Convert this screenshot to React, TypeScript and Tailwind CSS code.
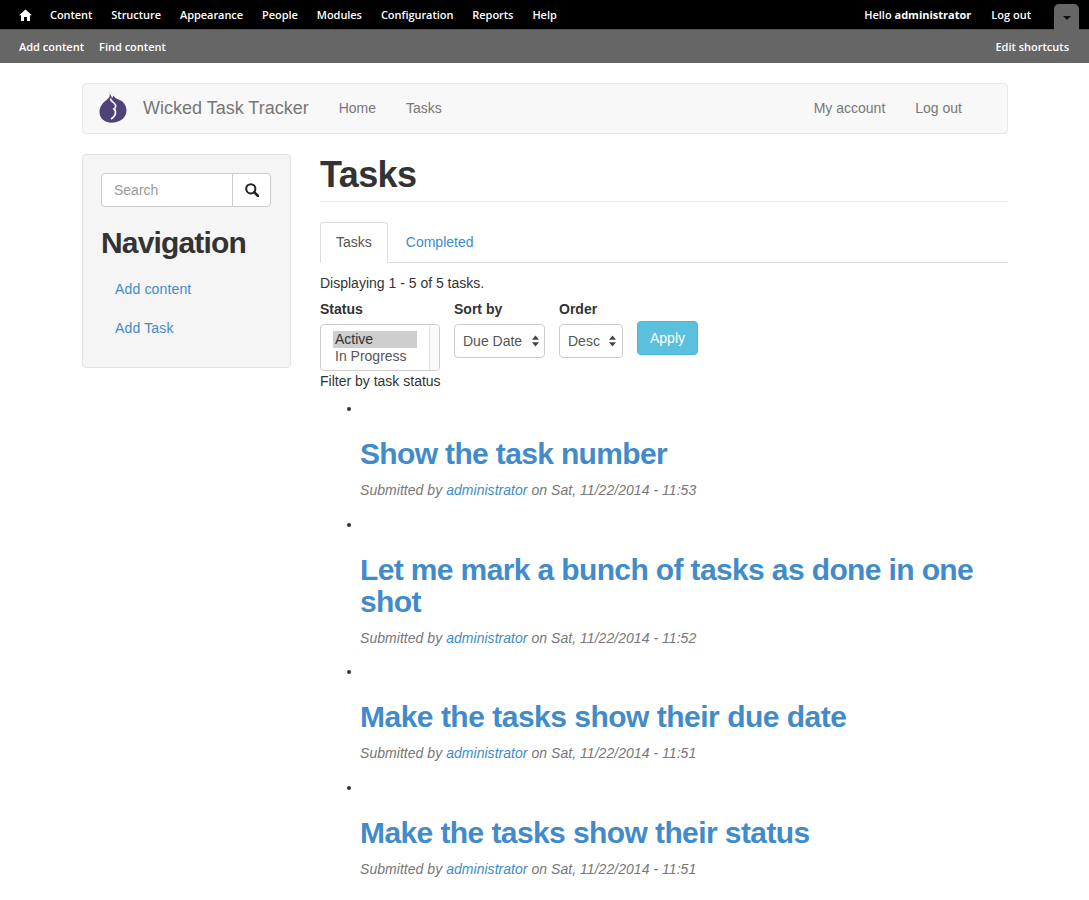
import React from "react";

const sans = "font-['Liberation_Sans',Arial,sans-serif]";

function Arrows() {
  return (
    <svg width="7" height="12" viewBox="0 0 7 12" className="ml-auto shrink-0">
      <path d="M3.5 0.5 L7 4.7 H0 Z M3.5 11.5 L7 7.3 H0 Z" fill="#444" />
    </svg>
  );
}

function Post({ title, date, tracking }: { title: React.ReactNode; date: string; tracking: string }) {
  return (
    <li className="list-disc">
      <div className="h-[20px]">&nbsp;</div>
      <h2 className={`ml-[-2px] mt-[20px] mb-[10px] text-[30px] leading-[32px] font-bold text-[#428bca] ${tracking}`}>{title}</h2>
      <p className="ml-[-2px] mb-[13.5px] italic text-[14px] leading-[20px] tracking-[0.04px] text-[#777]">
        Submitted by <a className="text-[#428bca]">administrator</a> on {date}
      </p>
    </li>
  );
}

export default function App() {
  return (
    <div className={`${sans} h-[900px] overflow-hidden bg-white text-[14px] leading-[20px] text-[#333]`}>
      <div className="font-['Open_Sans',sans-serif] text-[11px] font-semibold text-white">
        <div className="relative flex h-[29px] items-center bg-black pl-[19px] pr-[58px]">
          <svg width="13" height="12" viewBox="0 0 13 12" className="mr-[18px]">
            <path d="M6.5 0.5 L13 6.3 H11 V12 H8 V8 H5 V12 H2 V6.3 H0 Z" fill="#fff" />
          </svg>
          <div className="flex gap-[19px] tracking-[-0.05px]">
            <span>Content</span><span>Structure</span><span>Appearance</span><span>People</span>
            <span>Modules</span><span>Configuration</span><span>Reports</span><span>Help</span>
          </div>
          <div className="ml-auto flex gap-[20px]">
            <span>Hello <b className="font-bold">administrator</b></span><span>Log out</span>
          </div>
          <div className="absolute right-[10px] top-[4px] flex h-[26px] w-[25px] items-center justify-center rounded-t-[5px] bg-[#666]">
            <svg width="8" height="4" viewBox="0 0 8 4" className="mt-[2px]"><path d="M0 0H8L4 4Z" fill="#111" /></svg>
          </div>
        </div>
        <div className="flex h-[34px] items-center gap-[15px] border-t border-[#555] bg-[#666] pl-[19px] pr-[20px]">
          <span>Add content</span><span>Find content</span>
          <span className="ml-auto">Edit shortcuts</span>
        </div>
      </div>

      <div className="ml-[82px] w-[926px] pt-[20px]">
        <nav className="flex h-[51px] items-center rounded-[4px] border border-[#e7e7e7] bg-[#f8f8f8] pb-[1px] text-[#777]">
          <svg width="28" height="30" viewBox="0 0 28 30" className="ml-[16px]">
            <path d="M10.5 0.5 C11.5 3 10 5 7.5 7 C3 10 0.5 14.5 0.5 19 C0.5 25.5 6 29.7 12.5 29.7 C20.5 29.7 27.5 25 27.5 17.5 C27.5 12 24 8 19.5 6.5 C17 5.5 15.5 4.5 14.5 2.5 C14 4 13.5 4.5 13 5 C12.5 3.5 11.5 1.5 10.5 0.5 Z" fill="#4f4279" />
            <path d="M11.5 5.5 C11.5 8 13.5 8.5 15 10 C17.5 12.5 17 15 15 16 C17.5 18 17.2 23 12 26" fill="none" stroke="#f8f8f8" strokeWidth="1.7" />
          </svg>
          <span className="ml-[16px] text-[18px]">Wicked Task Tracker</span>
          <span className="ml-[30px]">Home</span>
          <span className="ml-[30px]">Tasks</span>
          <span className="ml-auto">My account</span>
          <span className="ml-[30px] mr-[45px]">Log out</span>
        </nav>

        <div className="mt-[20px] flex items-start">
          <aside className="h-[214px] w-[209px] shrink-0 rounded-[4px] border border-[#e3e3e3] bg-[#f5f5f5] px-[18px] pt-[18px]">
            <div className="flex h-[34px] w-[170px] rounded-[4px] border border-[#ccc] bg-white">
              <span className="flex-1 border-r border-[#ccc] pl-[12px] pt-[6px] text-[#999]">Search</span>
              <span className="flex w-[37px] items-center justify-center">
                <svg width="14" height="14" viewBox="0 0 14 14" fill="none" stroke="#222" strokeWidth="2">
                  <circle cx="5.8" cy="5.8" r="4.6" /><path d="M9.2 9.2 L13 13" strokeWidth="2.6" strokeLinecap="round" />
                </svg>
              </span>
            </div>
            <h2 className="mt-[19px] mb-[10px] text-[30px] leading-[33px] font-bold tracking-[-0.85px]">Navigation</h2>
            <ul className="text-[#428bca] tracking-[0.15px]">
              <li className="px-[14px] py-[10px]">Add content</li>
              <li className="mt-[-1px] px-[14px] py-[10px]">Add Task</li>
            </ul>
          </aside>

          <main className="ml-[29px] min-w-0 flex-1">
            <h1 className="border-b border-[#eee] pb-[7px] pt-[1px] text-[36px] leading-[39px] font-bold tracking-[-0.6px] text-[#333]">Tasks</h1>
            <div className="mt-[20px] flex h-[41px] border-b border-[#ddd]">
              <span className="h-[41px] rounded-t-[4px] border border-[#ddd] border-b-white bg-white px-[15px] pt-[9px] text-[#555]">Tasks</span>
              <span className="ml-[3px] px-[15px] pt-[10px] text-[#428bca]">Completed</span>
            </div>
            <p className="mt-[10px] h-[20px]">Displaying 1 - 5 of 5 tasks.</p>
            <div className="mt-[6px] flex items-start">
              <div className="w-[134px]">
                <div className="mb-[5px] font-bold">Status</div>
                <div className="flex h-[47px] w-[120px] overflow-hidden rounded-[4px] border border-[#ccc] text-[#555]">
                  <div className="flex-1 pl-[12px] pt-[6px] leading-[17px]">
                    <div className="w-[84px] bg-[#cecece] pl-[2px] text-[#333]">Active</div>
                    <div className="pl-[2px]">In Progress</div>
                  </div>
                  <div className="w-[10px] border-l border-[#e5e5e5] bg-[#fafafa]" />
                </div>
                <div className="w-[130px]">Filter by task status</div>
              </div>
              <div className="w-[105px]">
                <div className="mb-[5px] font-bold">Sort by</div>
                <div className="flex h-[34px] w-[91px] items-center rounded-[4px] border border-[#ccc] pl-[8px] pr-[5px] text-[#555]">Due Date<Arrows /></div>
              </div>
              <div className="w-[78px]">
                <div className="mb-[5px] font-bold">Order</div>
                <div className="flex h-[34px] w-[64px] items-center rounded-[4px] border border-[#ccc] pl-[8px] pr-[6px] text-[#555]">Desc<Arrows /></div>
              </div>
              <button className="mt-[22px] h-[34px] w-[61px] rounded-[4px] border border-[#46b8da] bg-[#5bc0de] text-white">Apply</button>
            </div>
            <ul className="ml-[42px] mt-[7px]">
              <Post tracking="tracking-[-0.65px]" title="Show the task number" date="Sat, 11/22/2014 - 11:53" />
              <Post tracking="tracking-[-0.63px]" title="Let me mark a bunch of tasks as done in one shot" date="Sat, 11/22/2014 - 11:52" />
              <Post tracking="tracking-[-0.5px]" title="Make the tasks show their due date" date="Sat, 11/22/2014 - 11:51" />
              <Post tracking="tracking-[-0.59px]" title="Make the tasks show their status" date="Sat, 11/22/2014 - 11:51" />
            </ul>
          </main>
        </div>
      </div>
    </div>
  );
}
